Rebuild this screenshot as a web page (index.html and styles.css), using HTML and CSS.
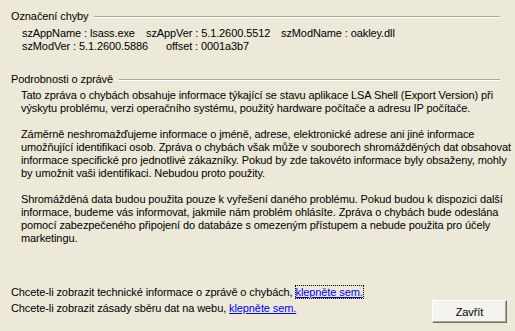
FILE: index.html
```html
<!DOCTYPE html>
<html lang="cs">
<head>
  <meta charset="UTF-8">
  <title>Zpráva o chybách</title>
  <link rel="stylesheet" href="styles.css">
</head>
<body>
  <div class="dialog">
    <div class="group-head">
      <span class="group-label">Označení chyby</span>
      <span class="group-line"></span>
    </div>
    <div class="sig">
      <div class="sig-row">
        <span class="sig-a">szAppName : lsass.exe</span>
        <span class="sig-b">szAppVer : 5.1.2600.5512</span>
        <span>szModName : oakley.dll</span>
      </div>
      <div class="sig-row">
        <span class="sig-c">szModVer : 5.1.2600.5886</span>
        <span>offset : 0001a3b7</span>
      </div>
    </div>

    <div class="group-head second">
      <span class="group-label">Podrobnosti o zprávě</span>
      <span class="group-line"></span>
    </div>
    <div class="details">
      <p>Tato zpráva o chybách obsahuje informace týkající se stavu aplikace LSA Shell (Export Version) při<br>
      výskytu problému, verzi operačního systému, použitý hardware počítače a adresu IP počítače.</p>
      <p>Záměrně neshromažďujeme informace o jméně, adrese, elektronické adrese ani jiné informace<br>
      umožňující identifikaci osob. Zpráva o chybách však může v souborech shromážděných dat obsahovat<br>
      informace specifické pro jednotlivé zákazníky. Pokud by zde takovéto informace byly obsaženy, mohly<br>
      by umožnit vaši identifikaci. Nebudou proto použity.</p>
      <p>Shromážděná data budou použita pouze k vyřešení daného problému. Pokud budou k dispozici další<br>
      informace, budeme vás informovat, jakmile nám problém ohlásíte. Zpráva o chybách bude odeslána<br>
      pomocí zabezpečeného připojení do databáze s omezeným přístupem a nebude použita pro účely<br>
      marketingu.</p>
    </div>

    <div class="footer">
      <div class="links">
        <div>Chcete-li zobrazit technické informace o zprávě o chybách, <a href="#" class="focused">klepněte sem.</a></div>
        <div>Chcete-li zobrazit zásady sběru dat na webu, <a href="#">klepněte sem.</a></div>
      </div>
      <button class="btn">Zavřít</button>
    </div>
  </div>
</body>
</html>
```

FILE: styles.css
```css
/* XP style dialog */
html, body {
  margin: 0;
  padding: 0;
  background: #ECE9D8;
}

body {
  font-family: Tahoma, 'Liberation Sans', Arial, sans-serif;
  font-size: 11px;
  line-height: 13px;
  letter-spacing: -0.1px;
  color: #000;
  width: 515px;
  height: 331px;
  overflow: hidden;
}

.dialog {
  padding: 10px 0 0 11px;
  width: 489px;
}

.group-head {
  display: flex;
  align-items: center;
}

.group-head.second {
  margin-top: 20px;
}

.group-label {
  white-space: nowrap;
  padding-right: 6px;
}

.group-line {
  flex: 1;
  height: 0;
  border-top: 1px solid #ACA899;
  border-bottom: 1px solid #fff;
  margin-top: 1px;
}

.sig {
  margin: 4px 0 0 11px;
}

.sig-row {
  display: flex;
  white-space: nowrap;
}

.sig-a {
  width: 124px;
}

.sig-b {
  width: 135px;
}

.sig-c {
  width: 144px;
}

.details {
  margin: 3px 0 0 10px;
}

.details p {
  margin: 0 0 13px 0;
  white-space: nowrap;
}

.footer {
  display: flex;
  justify-content: space-between;
  align-items: flex-start;
  margin-top: 41px;
}

.links div {
  height: 16px;
  white-space: nowrap;
}

.links a {
  color: #0000FF;
  text-decoration: underline;
}

.links a.focused {
  outline: 1px dotted #000;
  outline-offset: 0;
}

.btn {
  width: 75px;
  height: 23px;
  margin: 14px -7px 0 0;
  font-family: inherit;
  font-size: 11px;
  letter-spacing: inherit;
  color: #000;
  background: #F4F3EE;
  border: 1px solid;
  border-color: #fff #716F64 #716F64 #fff;
  box-shadow: inset -1px -1px 0 #ACA899;
  padding: 0;
}
```
